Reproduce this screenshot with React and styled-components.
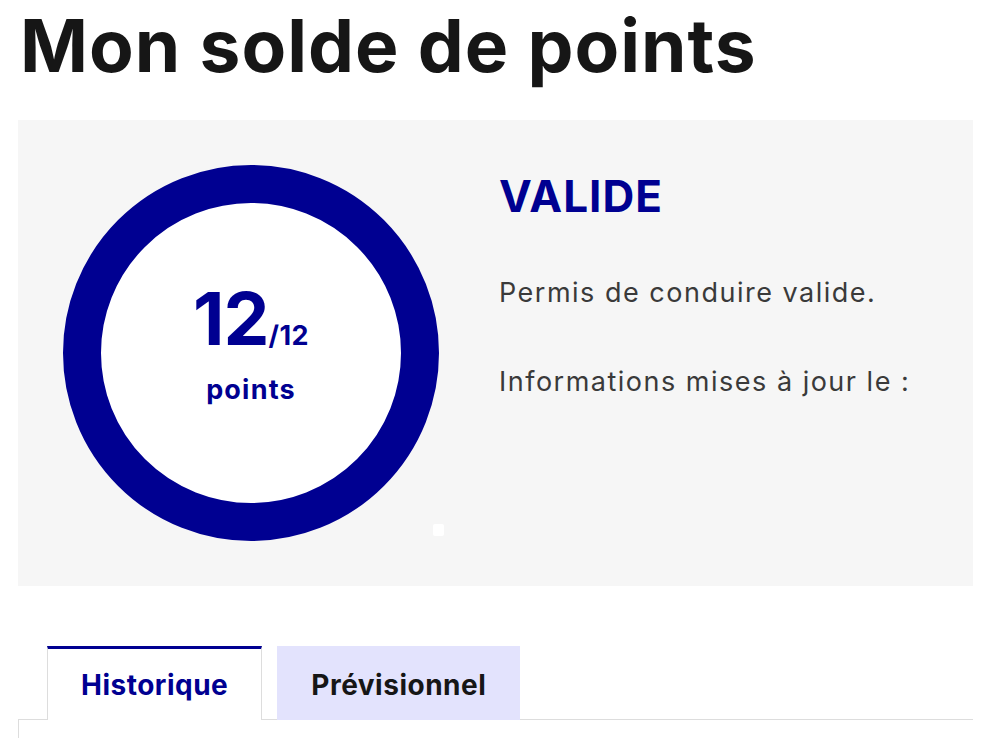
import React from 'react'
import styled, { createGlobalStyle } from 'styled-components'

const GlobalStyle = createGlobalStyle`
  body {
    margin: 0;
    background: #ffffff;
    font-family: Inter, "Open Sans", sans-serif;
    color: #161616;
  }
`

const tabs = [
  { label: 'Historique', active: true },
  { label: 'Prévisionnel', active: false },
]

const App = () => {
  return (
    <>
      <GlobalStyle />
      <Page>
        <Title>Mon solde de points</Title>
        <Card>
          <GaugeWrap>
            <Gauge>
              <Score>
                12<Max>/12</Max>
              </Score>
              <Unit>points</Unit>
            </Gauge>
            <Speck />
          </GaugeWrap>
          <Details>
            <Status>VALIDE</Status>
            <Line>Permis de conduire valide.</Line>
            <Line>Informations mises à jour le :</Line>
          </Details>
        </Card>
        <TabList>
          {tabs.map(tab => (
            <Tab key={tab.label} active={tab.active}>
              {tab.label}
            </Tab>
          ))}
        </TabList>
        <Panel />
      </Page>
    </>
  )
}

export default App

const Page = styled.div`
  padding: 0 13px 0 18px;
`

const Title = styled.h1`
  margin: 0;
  padding: 2px 0 0 2px;
  height: 120px;
  box-sizing: border-box;
  font-size: 73px;
  line-height: 88px;
  font-weight: 700;
  letter-spacing: 1px;
  color: #161616;
`

const Card = styled.div`
  display: flex;
  align-items: flex-start;
  background: #f6f6f6;
  padding: 45px;
  height: 466px;
  box-sizing: border-box;
`

const GaugeWrap = styled.div`
  position: relative;
  flex: none;
`

const Gauge = styled.div`
  width: 376px;
  height: 376px;
  box-sizing: border-box;
  border: 38px solid #000091;
  border-radius: 50%;
  background: #ffffff;
  display: flex;
  flex-direction: column;
  align-items: center;
  justify-content: center;
  color: #000091;
  font-weight: 700;
  padding-bottom: 18px;
`

const Score = styled.div`
  font-size: 73px;
  line-height: 74px;
  letter-spacing: -1px;
`

const Max = styled.span`
  font-size: 27px;
  letter-spacing: 0.5px;
`

const Unit = styled.div`
  font-size: 27px;
  line-height: 34px;
  letter-spacing: 1.2px;
`

const Speck = styled.div`
  position: absolute;
  left: 370px;
  top: 359px;
  width: 11px;
  height: 12px;
  border-radius: 2px;
  background: #ffffff;
`

const Details = styled.div`
  margin-left: 60px;
  padding-top: 6px;
`

const Status = styled.div`
  font-size: 44px;
  line-height: 50px;
  font-weight: 700;
  letter-spacing: 1px;
  color: #000091;
  margin-bottom: 48px;
`

const Line = styled.p`
  margin: 0 0 41px;
  font-size: 27px;
  line-height: 48px;
  letter-spacing: 1.5px;
  color: #3a3a3a;
`

const TabList = styled.div`
  display: flex;
  gap: 15px;
  margin-top: 60px;
  padding-left: 29px;
`

const Tab = styled.div`
  box-sizing: border-box;
  height: 74px;
  padding: 0 33px;
  display: flex;
  align-items: center;
  font-size: 28px;
  font-weight: 700;
  letter-spacing: 0.5px;
  color: ${p => (p.active ? '#000091' : '#161616')};
  background: ${p => (p.active ? '#ffffff' : '#e3e3fd')};
  border-top: 3px solid ${p => (p.active ? '#000091' : 'transparent')};
  border-left: 1px solid ${p => (p.active ? '#dddddd' : 'transparent')};
  border-right: 1px solid ${p => (p.active ? '#dddddd' : 'transparent')};
  margin-bottom: -1px;
  position: relative;
`

const Panel = styled.div`
  border-top: 1px solid #dddddd;
  border-left: 1px solid #dddddd;
  height: 40px;
`
